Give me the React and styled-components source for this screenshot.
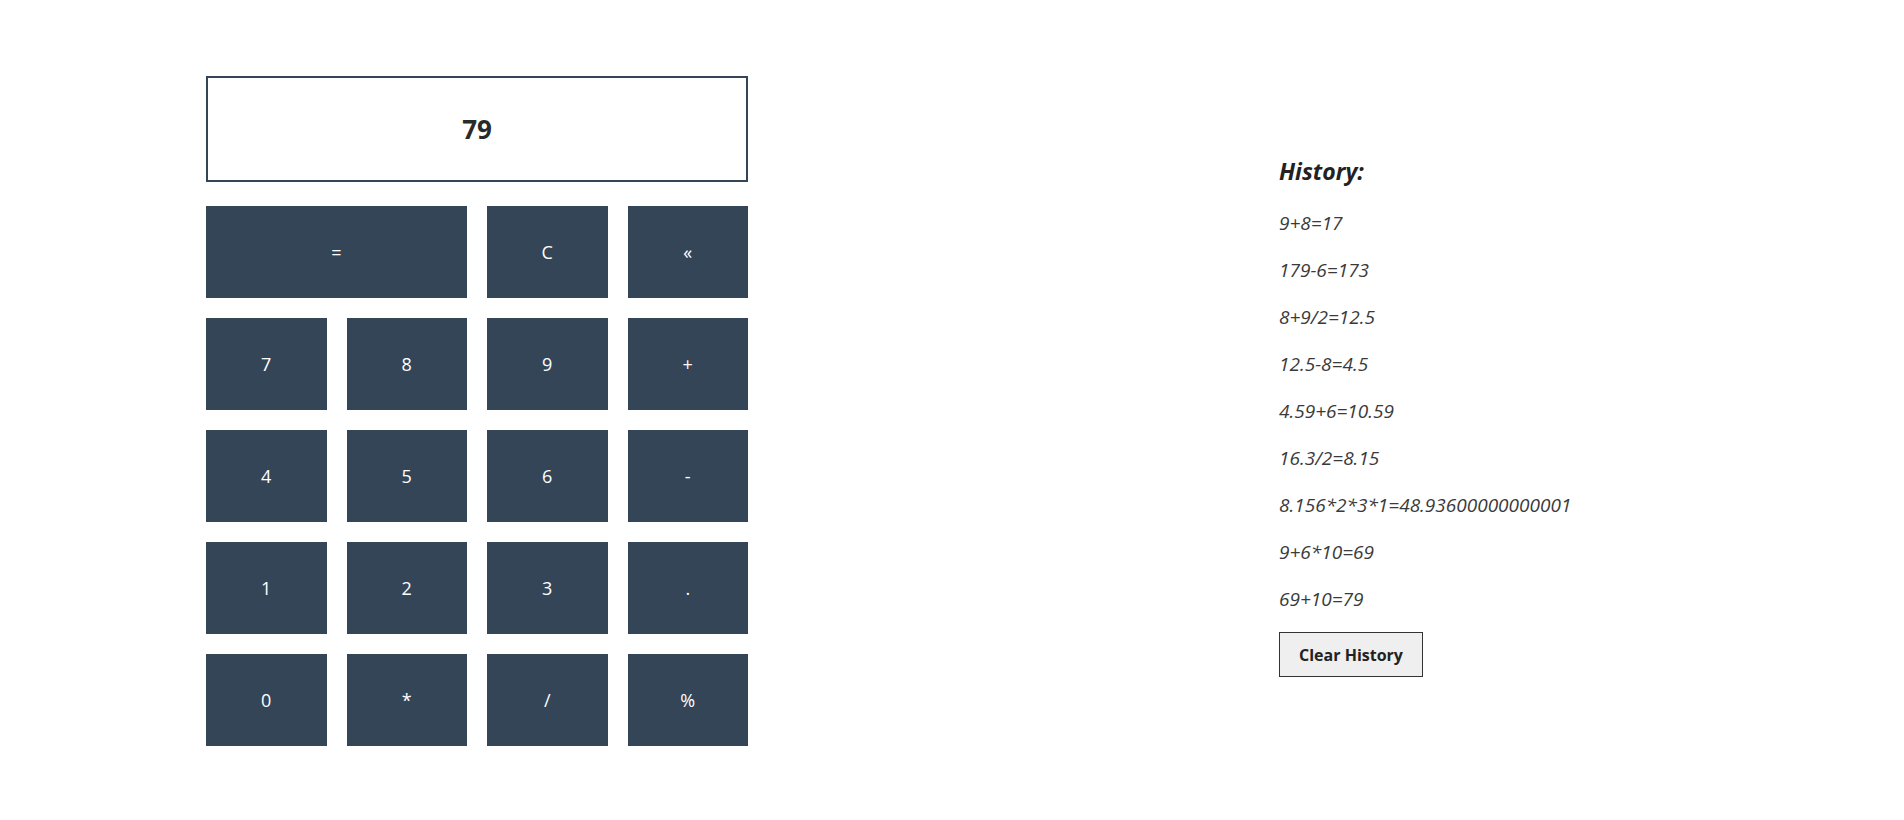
import React, { useState } from "react";
import styled, { createGlobalStyle } from "styled-components";

const GlobalStyle = createGlobalStyle`
  html, body {
    margin: 0;
    padding: 0;
    background: #fff;
  }
  body {
    font-family: "Open Sans", "Noto Sans", sans-serif;
    color: #222;
  }
`;

const Page = styled.div`
  display: flex;
  align-items: flex-start;
  padding: 76px 0 0 206px;
  gap: 531px;
`;

const Calculator = styled.div`
  width: 542px;
`;

const Display = styled.div`
  box-sizing: border-box;
  height: 106px;
  border: 2px solid #344557;
  display: flex;
  align-items: center;
  justify-content: center;
  font-size: 26px;
  font-weight: 700;
  color: #2a2a2a;
  margin-bottom: 24px;
`;

const Keys = styled.div`
  display: grid;
  grid-template-columns: repeat(4, 1fr);
  grid-auto-rows: 92px;
  gap: 20px;
`;

const Key = styled.button`
  grid-column: span ${(props) => props.$span || 1};
  border: none;
  margin: 0;
  padding: 0;
  background: #344557;
  color: #fff;
  font-family: inherit;
  font-size: 18px;
  cursor: pointer;
  &:hover {
    background: #2c3a4a;
  }
`;

const History = styled.div`
  padding-top: 80px;
`;

const HistoryTitle = styled.h3`
  margin: 0 0 23px;
  font-size: 23px;
  line-height: 31px;
  font-weight: 700;
  font-style: italic;
  color: #222;
`;

const HistoryItem = styled.p`
  margin: 0 0 20px;
  font-size: 19px;
  line-height: 27px;
  font-style: italic;
  color: #3a3a3a;
`;

const ClearBtn = styled.button`
  box-sizing: border-box;
  width: 144px;
  height: 45px;
  margin-top: -1px;
  background: #efefef;
  border: 1px solid #333;
  font-family: inherit;
  font-size: 16px;
  font-weight: 700;
  color: #222;
  cursor: pointer;
`;

const initialHistory = [
  "9+8=17",
  "179-6=173",
  "8+9/2=12.5",
  "12.5-8=4.5",
  "4.59+6=10.59",
  "16.3/2=8.15",
  "8.156*2*3*1=48.93600000000001",
  "9+6*10=69",
  "69+10=79",
];

const rows = [
  ["7", "8", "9", "+"],
  ["4", "5", "6", "-"],
  ["1", "2", "3", "."],
  ["0", "*", "/", "%"],
];

export default function App() {
  const [value, setValue] = useState("79");
  const [history, setHistory] = useState(initialHistory);

  const press = (k) => setValue((v) => v + k);

  const calculate = () => {
    try {
      // eslint-disable-next-line no-new-func
      const result = Function(`"use strict"; return (${value})`)();
      setHistory((h) => [...h, `${value}=${result}`]);
      setValue(String(result));
    } catch (e) {
      setValue("Error");
    }
  };

  return (
    <>
      <GlobalStyle />
      <Page>
        <Calculator>
          <Display>{value}</Display>
          <Keys>
            <Key $span={2} onClick={calculate}>
              =
            </Key>
            <Key onClick={() => setValue("")}>C</Key>
            <Key onClick={() => setValue((v) => v.slice(0, -1))}>«</Key>
            {rows.flat().map((k) => (
              <Key key={k} onClick={() => press(k)}>
                {k}
              </Key>
            ))}
          </Keys>
        </Calculator>
        <History>
          <HistoryTitle>History:</HistoryTitle>
          {history.map((item, i) => (
            <HistoryItem key={i}>{item}</HistoryItem>
          ))}
          <ClearBtn onClick={() => setHistory([])}>Clear History</ClearBtn>
        </History>
      </Page>
    </>
  );
}
